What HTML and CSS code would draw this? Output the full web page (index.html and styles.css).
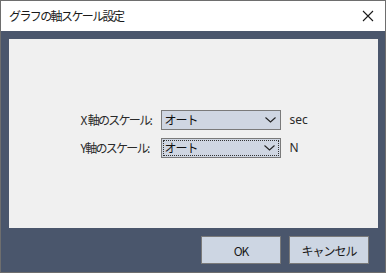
FILE: index.html
```html
<!DOCTYPE html>
<html lang="ja">
<head>
<meta charset="utf-8">
<link rel="stylesheet" href="styles.css">
</head>
<body>
<div class="window">
  <div class="titlebar">
    <span class="title">グラフの軸スケール設定</span>
    <svg class="close" width="12" height="12" viewBox="0 0 12 12"><path d="M1 1 L11 11 M11 1 L1 11" stroke="#1a1a1a" stroke-width="1.1" fill="none"/></svg>
  </div>
  <div class="client">
    <div class="panel">
      <div class="form">
        <span class="label">X&nbsp;&nbsp;軸のスケール:</span>
        <div class="combo"><span class="val">オート</span><svg class="chev" width="11" height="6" viewBox="0 0 11 6"><path d="M0.5 0.5 L5.5 5 L10.5 0.5" stroke="#222" stroke-width="1.1" fill="none"/></svg></div>
        <span class="unit">sec</span>
        <span class="label">Y軸のスケール:</span>
        <div class="combo focus"><div class="focusring"><span class="val">オート</span><svg class="chev" width="11" height="6" viewBox="0 0 11 6"><path d="M0.5 0.5 L5.5 5 L10.5 0.5" stroke="#222" stroke-width="1.1" fill="none"/></svg></div></div>
        <span class="unit">N</span>
      </div>
    </div>
    <div class="buttons">
      <button class="btn">OK</button>
      <button class="btn">キャンセル</button>
    </div>
  </div>
</div>
</body>
</html>
```
FILE: styles.css
```css
html, body { margin: 0; padding: 0; }
body {
  font-family: "Noto Sans CJK JP", "Noto Sans", sans-serif;
  font-size: 12px;
  color: #222;
}
.window {
  width: 386px;
  height: 273px;
  box-sizing: border-box;
  border: 1px solid #6e6e6e;
  display: flex;
  flex-direction: column;
}
.titlebar {
  height: 30px;
  background: #ffffff;
  display: flex;
  align-items: center;
  justify-content: space-between;
  padding: 0 11px 0 8px;
  flex: none;
}
.title {
  font-size: 12px;
  letter-spacing: -1.6px;
  color: #1a1a1a;
  line-height: 14px;
}
.close { display: block; }
.client {
  flex: 1;
  background: #4a566c;
  padding: 8px 7px 8px 8px;
  display: flex;
  flex-direction: column;
}
.panel {
  height: 189px;
  background: #f0f0f0;
  display: flex;
  align-items: center;
  justify-content: center;
}
.form {
  display: grid;
  grid-template-columns: 72px 120px 18px;
  column-gap: 8px;
  row-gap: 8px;
  align-items: center;
}
.label {
  font-size: 12px;
  letter-spacing: -1.7px;
  color: #2a2a2a;
  white-space: nowrap;
  line-height: 14px;
}
.unit {
  padding-left: 1px;
  color: #2a2a2a;
  font-family: "Noto Sans", sans-serif;
  font-size: 12px;
}
.combo {
  height: 20px;
  box-sizing: border-box;
  border: 1px solid #7a7a7a;
  background: #cfd6e2;
  display: flex;
  align-items: center;
  padding: 0 4px 0 3px;
  justify-content: space-between;
}
.combo.focus { padding: 1px; }
.focusring {
  flex: 1;
  height: 100%;
  box-sizing: border-box;
  border: 1px dotted #333;
  display: flex;
  align-items: center;
  justify-content: space-between;
  padding: 0 3px 0 1px;
}
.val {
  font-size: 12px;
  letter-spacing: -1px;
  color: #111;
  line-height: 14px;
}
.chev { display: block; }
.buttons {
  margin-top: 8px;
  display: flex;
  justify-content: flex-end;
  gap: 8px;
  padding-right: 9px;
}
.btn {
  width: 80px;
  height: 28px;
  box-sizing: border-box;
  border: 1px solid #7a7a7a;
  background: #cdd6e3;
  font-family: "Noto Sans CJK JP", "Noto Sans", sans-serif;
  font-size: 12px;
  color: #1a1a1a;
  letter-spacing: -1px;
  padding: 0;
  margin: 0;
}
```
